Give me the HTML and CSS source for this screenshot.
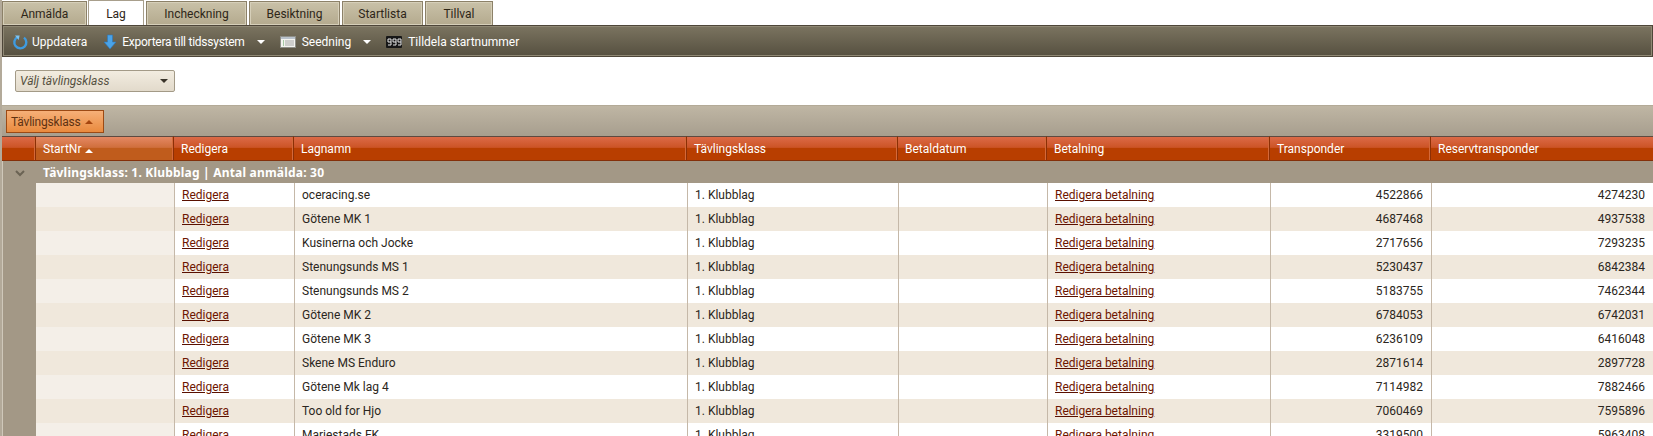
FILE: index.html
```html
<!DOCTYPE html>
<html lang="sv">
<head>
<meta charset="utf-8">
<title>Lag</title>
<link rel="stylesheet" href="styles.css">
</head>
<body>
<div class="page">
  <nav class="tabs">
    <span class="tab t1">Anmälda</span>
    <span class="tab t2 active">Lag</span>
    <span class="tab t3">Incheckning</span>
    <span class="tab t4">Besiktning</span>
    <span class="tab t5">Startlista</span>
    <span class="tab t6">Tillval</span>
  </nav>
  <div class="toolbar">
    <span class="tool tool-a">
      <svg class="ico" viewBox="0 0 16 16" width="16" height="16"><path d="M5.2 3.2A6 6 0 1 0 12 3.6" fill="none" stroke="#3f9be0" stroke-width="2.4"/><path d="M3 1.6 7.6 1.4 6.6 6z" fill="#7cc4f2"/></svg>
      Uppdatera
    </span>
    <span class="tool tool-b">
      <svg class="ico" viewBox="0 0 16 16" width="16" height="16"><path d="M5.5 1h5v7h3.5L8 15 2 8h3.5z" fill="#4aa3e8" stroke="#2a78c0" stroke-width=".6"/></svg>
      <span class="tight">Exportera till tidssystem</span>
      <i class="caret"></i>
    </span>
    <span class="tool tool-c">
      <svg class="ico wide" viewBox="0 0 16 12" width="16" height="12"><rect x=".5" y=".5" width="15" height="11" fill="#f4f4f0" stroke="#8f8f88"/><rect x="1" y="1" width="14" height="2" fill="#b9c2cc"/><path d="M3 5h1M3 7h1M3 9h1" stroke="#5aa05a"/><path d="M5 5h9M5 7h9M5 9h9" stroke="#a8a8a8"/></svg>
      Seedning
      <i class="caret"></i>
    </span>
    <span class="tool">
      <svg class="ico wide" viewBox="0 0 16 12" width="16" height="12"><rect width="16" height="12" rx="1" fill="#171717"/><path d="M5 6H2V3h3v6H2M10 6H7V3h3v6H7M15 6h-3V3h3v6h-3" fill="none" stroke="#e6e6e6"/></svg>
      Tilldela startnummer
    </span>
  </div>
  <div class="filter">
    <div class="select"><span>Välj tävlingsklass</span><i class="caret dark"></i></div>
  </div>
  <div class="grouppanel">
    <span class="groupbtn">Tävlingsklass <i class="up brown"></i></span>
  </div>
  <table class="grid">
    <colgroup>
      <col class="c0"><col class="c1"><col class="c2"><col class="c3"><col class="c4"><col class="c5"><col class="c6"><col class="c7"><col>
    </colgroup>
    <thead>
      <tr>
        <th></th>
        <th class="sorted">StartNr <i class="up"></i></th>
        <th>Redigera</th>
        <th>Lagnamn</th>
        <th>Tävlingsklass</th>
        <th>Betaldatum</th>
        <th>Betalning</th>
        <th>Transponder</th>
        <th>Reservtransponder</th>
      </tr>
    </thead>
    <tbody>
      <tr class="grp">
        <td class="exp"><svg viewBox="0 0 10 7" width="10" height="7"><path d="M1 1l4 4 4-4" fill="none" stroke="#6b6354" stroke-width="2"/></svg></td>
        <td colspan="8">Tävlingsklass: 1. Klubblag | Antal anmälda: 30</td>
      </tr>
      <tr><td class="ind"></td><td class="sc"></td><td><a>Redigera</a></td><td>oceracing.se</td><td>1. Klubblag</td><td></td><td><a>Redigera betalning</a></td><td class="n">4522866</td><td class="n">4274230</td></tr>
      <tr class="alt"><td class="ind"></td><td class="sc"></td><td><a>Redigera</a></td><td>Götene MK 1</td><td>1. Klubblag</td><td></td><td><a>Redigera betalning</a></td><td class="n">4687468</td><td class="n">4937538</td></tr>
      <tr><td class="ind"></td><td class="sc"></td><td><a>Redigera</a></td><td>Kusinerna och Jocke</td><td>1. Klubblag</td><td></td><td><a>Redigera betalning</a></td><td class="n">2717656</td><td class="n">7293235</td></tr>
      <tr class="alt"><td class="ind"></td><td class="sc"></td><td><a>Redigera</a></td><td>Stenungsunds MS 1</td><td>1. Klubblag</td><td></td><td><a>Redigera betalning</a></td><td class="n">5230437</td><td class="n">6842384</td></tr>
      <tr><td class="ind"></td><td class="sc"></td><td><a>Redigera</a></td><td>Stenungsunds MS 2</td><td>1. Klubblag</td><td></td><td><a>Redigera betalning</a></td><td class="n">5183755</td><td class="n">7462344</td></tr>
      <tr class="alt"><td class="ind"></td><td class="sc"></td><td><a>Redigera</a></td><td>Götene MK 2</td><td>1. Klubblag</td><td></td><td><a>Redigera betalning</a></td><td class="n">6784053</td><td class="n">6742031</td></tr>
      <tr><td class="ind"></td><td class="sc"></td><td><a>Redigera</a></td><td>Götene MK 3</td><td>1. Klubblag</td><td></td><td><a>Redigera betalning</a></td><td class="n">6236109</td><td class="n">6416048</td></tr>
      <tr class="alt"><td class="ind"></td><td class="sc"></td><td><a>Redigera</a></td><td>Skene MS Enduro</td><td>1. Klubblag</td><td></td><td><a>Redigera betalning</a></td><td class="n">2871614</td><td class="n">2897728</td></tr>
      <tr><td class="ind"></td><td class="sc"></td><td><a>Redigera</a></td><td>Götene Mk lag 4</td><td>1. Klubblag</td><td></td><td><a>Redigera betalning</a></td><td class="n">7114982</td><td class="n">7882466</td></tr>
      <tr class="alt"><td class="ind"></td><td class="sc"></td><td><a>Redigera</a></td><td>Too old for Hjo</td><td>1. Klubblag</td><td></td><td><a>Redigera betalning</a></td><td class="n">7060469</td><td class="n">7595896</td></tr>
      <tr><td class="ind"></td><td class="sc"></td><td><a>Redigera</a></td><td>Mariestads FK</td><td>1. Klubblag</td><td></td><td><a>Redigera betalning</a></td><td class="n">3319500</td><td class="n">5963408</td></tr>
    </tbody>
  </table>
</div>
</body>
</html>
```
FILE: styles.css
```css
* { box-sizing: border-box; }
html, body { margin: 0; height: 436px; overflow: hidden; background: #fff; }
body {
  font-family: Roboto, sans-serif;
  font-size: 12px;
  color: #2b2620;
}
.page { width: 1653px; height: 436px; overflow: hidden; border-left: 2px solid #b3aa9a; }

.tabs { display: flex; height: 25px; padding-top: 1px; }
.tab {
  display: flex; align-items: center; justify-content: center;
  height: 24px;
  border: 1px solid #8c8168; border-bottom: 0;
  background: linear-gradient(#c9c1a8, #b4aa8e);
  box-shadow: inset 0 0 0 1px #d6cfb9;
  margin-right: 2px;
  padding-top: 1px;
  color: #2e2618;
}
.t1 { width: 85px; margin-right: 1px; }
.t2 { width: 56px; }
.t3 { width: 101px; }
.t4 { width: 91px; }
.t5 { width: 81px; }
.t6 { width: 68px; }
.tab.active { background: #fff; box-shadow: none; border-color: #a89f8c; margin-top: -1px; height: 25px; }

.toolbar {
  display: flex; align-items: center;
  height: 32px; padding: 1px 0 0 9px;
  border: 1px solid #4e4639;
  box-shadow: inset 0 0 0 1px #8f8874;
  background: linear-gradient(#7b7460, #565040);
  color: #fff;
  white-space: nowrap;
}
.tool { display: flex; align-items: center; }
.tight { letter-spacing: -0.25px; }
.ico { margin-right: 4px; flex: none; }
.tool-a { margin-right: 15px; }
.tool-b { margin-right: 15px; }
.tool-c { margin-right: 15px; }
.ico.wide { margin-right: 6px; }
.caret {
  display: inline-block; width: 0; height: 0;
  border-left: 4px solid transparent; border-right: 4px solid transparent;
  border-top: 4px solid #fff;
  margin-left: 12px;
}
.caret.dark { border-top-color: #3a342a; margin: 0; }

.filter { height: 48px; padding: 13px 0 0 13px; }
.select {
  display: flex; align-items: center; justify-content: space-between;
  width: 160px; height: 22px; padding: 0 6px 0 4px;
  border: 1px solid #a39a87; border-radius: 2px;
  background: linear-gradient(#f2ece0, #e2dacb);
  font-style: italic; color: #55503f;
}

.grouppanel {
  height: 31px; padding: 4px 0 0 4px;
  background: linear-gradient(#bfb6a4, #a79e8e);
  border-top: 1px solid #b3aa97;
}
.groupbtn {
  display: inline-flex; align-items: center;
  width: 98px; height: 23px; padding-left: 4px;
  border: 1px solid #9c4a14;
  background: linear-gradient(#f6b078, #e98a3e);
  color: #5e3212;
  letter-spacing: -0.2px;
}
.up {
  display: inline-block; width: 0; height: 0;
  border-left: 4px solid transparent; border-right: 4px solid transparent;
  border-bottom: 4px solid #fff;
  margin-left: 1px;
}
.up.brown { border-bottom-color: #a5460f; margin-left: 5px; }

.grid { border-collapse: separate; border-spacing: 0; table-layout: fixed; width: 1651px; }
.c0 { width: 34px; }
.c1 { width: 138px; }
.c2 { width: 120px; }
.c3 { width: 393px; }
.c4 { width: 211px; }
.c5 { width: 149px; }
.c6 { width: 223px; }
.c7 { width: 161px; }

th {
  height: 25px; padding: 0 7px;
  text-align: left; font-weight: 400; color: #fff;
  background: linear-gradient(#dc6a47 0, #cc5426 45%, #b83e00 50%, #b83e00 100%);
  border-top: 1px solid #5e4a40;
  border-bottom: 1px solid #84300a;
  border-right: 1px solid #8c2f05;
  box-shadow: inset -1px 0 0 #d4693a;
  white-space: nowrap;
}
th:first-child { padding: 0; }
th:last-child { border-right: 0; box-shadow: none; }
th.sorted { padding-left: 7px; background: linear-gradient(#e48863 0, #d06f3c 45%, #c05c1c 50%, #c05c1c 100%); }

.grp td {
  height: 22px; padding: 0 0 0 7px;
  background: #a39886;
  color: #fff;
  font-family: "Noto Sans", sans-serif;
  font-weight: 700;
  letter-spacing: 0.2px;
  white-space: nowrap;
}
.grp .exp { padding: 0; text-align: center; border-left: 1px solid #cfc8ba; }
.exp svg { display: block; margin: 2px auto 0; }

tbody tr:not(.grp) td {
  height: 24px; padding: 0 7px 0 7px;
  background: #fff;
  border-left: 1px solid #c5b8a8;
  white-space: nowrap;
}
tbody tr.alt td { background: #f0e8dc; }
tbody tr:not(.grp) td.ind { background: #a39886; border-left: 1px solid #cfc8ba; }
tbody tr:not(.grp) td.sc { background: #f4efe8; border-left: 0; }
tbody tr.alt td.sc { background: #f0e8dc; }
tbody tr:not(.grp) td.n { text-align: right; padding-right: 8px; }
a { color: #6e1500; text-decoration: underline; text-decoration-color: #5a1000; }
```
